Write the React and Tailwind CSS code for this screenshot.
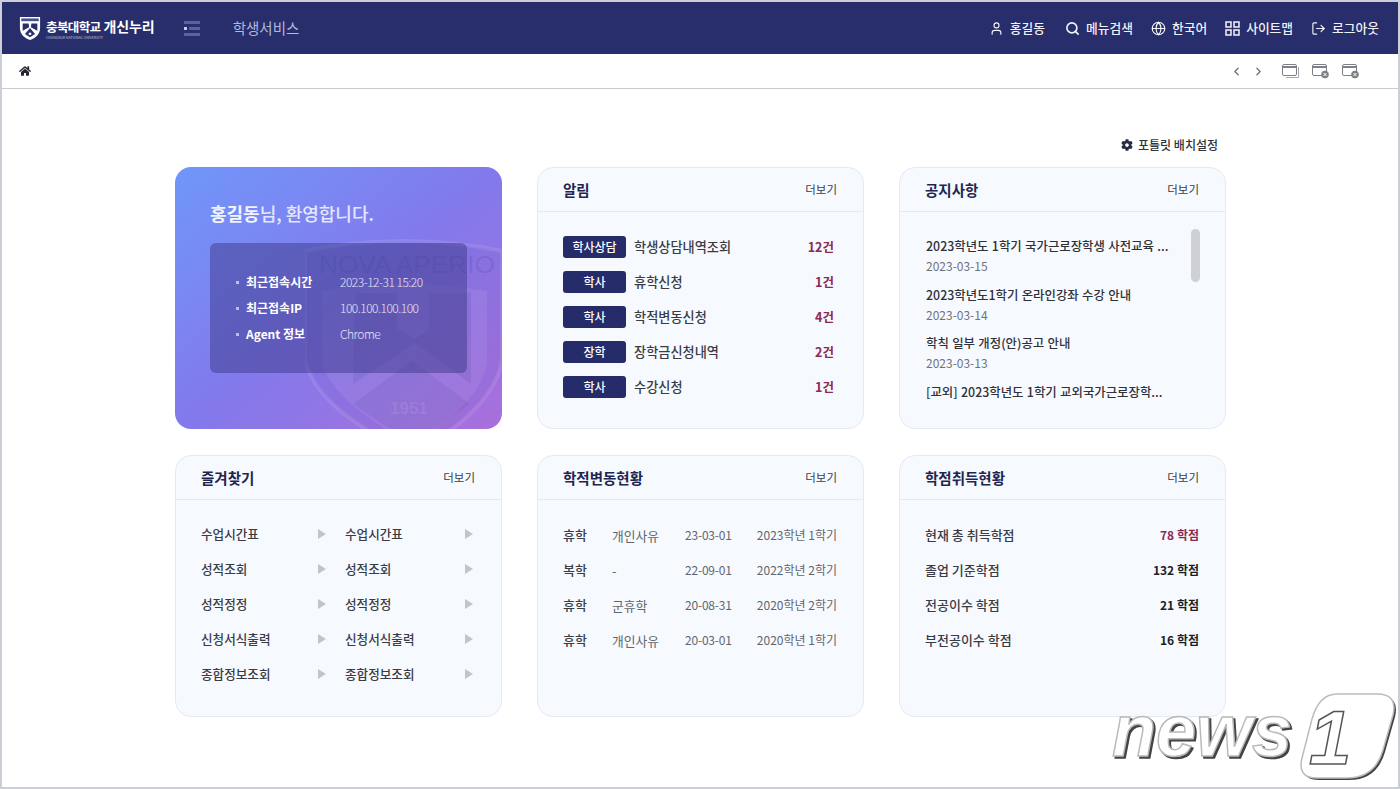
import { User, Search, Globe, LogOut, ChevronLeft, ChevronRight } from "lucide-react";
import { FaCog, FaHome } from "react-icons/fa";

const topMenu = [
  { icon: User, label: "홍길동" },
  { icon: Search, label: "메뉴검색", stroke: 2.6 },
  { icon: Globe, label: "한국어" },
  { icon: GridIcon, label: "사이트맵" },
  { icon: LogOut, label: "로그아웃" },
];

const alerts = [
  { tag: "학사상담", name: "학생상담내역조회", count: "12건" },
  { tag: "학사", name: "휴학신청", count: "1건" },
  { tag: "학사", name: "학적변동신청", count: "4건" },
  { tag: "장학", name: "장학금신청내역", count: "2건" },
  { tag: "학사", name: "수강신청", count: "1건" },
];

const notices = [
  { title: "2023학년도 1학기 국가근로장학생 사전교육 ...", date: "2023-03-15" },
  { title: "2023학년도1학기 온라인강좌 수강 안내", date: "2023-03-14" },
  { title: "학칙 일부 개정(안)공고 안내", date: "2023-03-13" },
  { title: "[교외] 2023학년도 1학기 교외국가근로장학..." },
];

const favorites = ["수업시간표", "성적조회", "성적정정", "신청서식출력", "종합정보조회"];

const changes = [
  ["휴학", "개인사유", "23-03-01", "2023학년 1학기"],
  ["복학", "-", "22-09-01", "2022학년 2학기"],
  ["휴학", "군휴학", "20-08-31", "2020학년 2학기"],
  ["휴학", "개인사유", "20-03-01", "2020학년 1학기"],
];

const credits = [
  { label: "현재 총 취득학점", value: "78 학점", hot: true },
  { label: "졸업 기준학점", value: "132 학점" },
  { label: "전공이수 학점", value: "21 학점" },
  { label: "부전공이수 학점", value: "16 학점" },
];

function GridIcon({ size = 15, className }) {
  return (
    <svg width={size} height={size} viewBox="0 0 15 15" fill="none" stroke="currentColor" strokeWidth="1.5" className={className}>
      <rect x="1" y="1" width="5" height="5" />
      <rect x="9" y="1" width="5" height="5" />
      <rect x="1" y="9" width="5" height="5" />
      <rect x="9" y="9" width="5" height="5" />
    </svg>
  );
}

function WindowIcon({ mode }) {
  return (
    <svg width="18" height="16" viewBox="0 0 18 16" fill="none">
      <rect x="0.5" y="1.5" width="14" height="11" rx="1.5" stroke="#7d8087" fill="#fff" />
      <path d="M1 4h13" stroke="#7d8087" strokeWidth="2" />
      {mode === "copy" && <path d="M16.5 4v10.500H4" stroke="#a6a8ae" />}
      {mode === "close" && (
        <>
          <circle cx="13" cy="11.500" r="3.800" fill="#7d8087" />
          <path d="M11.500 10l3 3M14.500 10l-3 3" stroke="#fff" />
        </>
      )}
    </svg>
  );
}

function Shield({ className }) {
  return (
    <svg viewBox="0 0 24 27" className={className}>
      <path d="M1 1h22v12c0 7-5 11-11 13C6 24 1 20 1 13z" fill="#fff" />
      <path d="M2.500 2.500h19v3h-19z" fill="#4a5090" />
      <path d="M4 8h6.500L11 12 4 16zM20 8h-6.500L13 12l7 4z" fill="#272e6b" />
      <path d="M12 13l5.500 6.500L12 23l-5.500-3.500z" fill="#272e6b" />
      <path d="M12 17.500l2 2-2 1.300-2-1.300z" fill="#fff" />
    </svg>
  );
}

function Card({ title, children }) {
  return (
    <section className="h-[262px] rounded-2xl border border-[#e6e9f1] bg-[#f6f9fe] flex flex-col">
      <div className="h-[44px] shrink-0 flex items-center justify-between pl-[25px] pr-[26px] border-b border-[#e6e9f1]">
        <h2 className="text-[14.500px] font-bold text-[#1f2550]">{title}</h2>
        <span className="text-[11.500px] text-[#3a3d46]">더보기</span>
      </div>
      {children}
    </section>
  );
}

function WelcomeCard() {
  return (
    <section className="relative h-[262px] rounded-2xl overflow-hidden bg-gradient-to-br from-[#6f97fb] via-[#8279ec] to-[#a96fdb]">
      <svg viewBox="0 0 197 190" className="absolute left-[130px] top-[72px] w-[197px] h-[190px]">
        <path d="M0 12 Q100 -8 197 12 V120 Q190 170 107 215 Q10 170 0 120 Z" fill="#4a3fa0" fillOpacity="0.07" stroke="#fff" strokeOpacity="0.1" strokeWidth="4" />
        <path d="M17 52 Q100 38 182 52 V125 Q175 165 107 205 Q30 165 17 125 Z" fill="#fff" fillOpacity="0.07" />
        <path d="M50 54 H92 V90 L110 100 V104 L48 145 Z" fill="#4a3fa0" fillOpacity="0.14" />
        <path d="M166 54 H124 V90 L110 100 V104 L166 145 Z" fill="#4a3fa0" fillOpacity="0.14" />
        <path d="M107 122 L165 165 L107 205 L48 165 Z" fill="#4a3fa0" fillOpacity="0.12" />
        <text x="14" y="34" fontSize="24" fill="#4a3fa0" fillOpacity="0.2" fontFamily="Liberation Sans, sans-serif" textLength="176" lengthAdjust="spacingAndGlyphs">NOVA APERIO</text>
        <text x="85" y="175" fontSize="17" fontWeight="700" fill="#fff" fillOpacity="0.1" fontFamily="Liberation Sans, sans-serif">1951</text>
      </svg>
      <div className="relative pt-[35px] pl-[35px]">
        <h2 className="text-lg leading-6 -mt-px font-medium text-white/80">
          <span className="font-bold text-white/90">홍길동</span>님, 환영합니다.
        </h2>
        <dl className="mt-[18px] w-[257px] h-[130px] rounded-md bg-[#3b3a8a]/50 pt-[29px] pl-[26px] flex flex-col gap-[6px] text-xs text-white">
          {[
            ["최근접속시간", "2023-12-31 15:20"],
            ["최근접속IP", "100.100.100.100"],
            ["Agent 정보", "Chrome"],
          ].map(([key, value]) => (
            <div key={key} className="flex items-center h-5">
              <span className="size-[3px] bg-white/60 mr-[7px]" />
              <dt className="w-[94px] font-bold">{key}</dt>
              <dd className="font-light tracking-[-0.5px] text-white/85">{value}</dd>
            </div>
          ))}
        </dl>
      </div>
    </section>
  );
}

function News1Logo() {
  const font = "Liberation Sans, sans-serif";
  const badge = "M230 4 H270 Q291 4 286 25 L276 60 Q268 88 240 88 H210 Q190 88 195 68 L205 29 Q212 4 230 4 Z";
  return (
    <svg width="292" height="92" viewBox="0 0 292 92" className="absolute left-[1105px] top-[688px]">
      <g className="drop-shadow-[2px_2px_0_#444]">
        <text x="5" y="66" fontSize="75" fontWeight="700" fontStyle="italic" fontFamily={font} textLength="180" lengthAdjust="spacingAndGlyphs" fill="#fff" stroke="#b9b9b9" strokeWidth="1.500">news</text>
      </g>
      <path d={badge} fill="#444" transform="translate(2 2)" />
      <path d={badge} fill="#fff" stroke="#bcbcbc" strokeWidth="1.500" />
      <text x="202" y="74" fontSize="76" fontWeight="700" fontStyle="italic" fontFamily={font} fill="#fff" stroke="#555" strokeWidth="1.500">1</text>
    </svg>
  );
}

export default function App() {
  return (
    <div className="relative w-[1400px] h-[789px] overflow-hidden border-2 border-[#cdcfd6] bg-white [font-family:'Noto_Sans_CJK_KR','Noto_Sans',sans-serif]">
      <header className="h-[52px] bg-[#272e6b] flex items-center pl-[17px] pr-[19px] text-white">
        <Shield className="w-[22px] h-[25px]" />
        <div className="ml-[5px] flex flex-col">
          <div className="flex items-baseline leading-[15px]">
            <span className="text-[12.500px] font-bold tracking-[-0.6px]">충북대학교</span>
            <span className="ml-[3px] text-sm font-bold tracking-[-0.1px]">개신누리</span>
          </div>
          <span className="text-[3.500px] leading-[4px] text-white/70">CHUNGBUK NATIONAL UNIVERSITY</span>
        </div>
        <div className="ml-[29px] w-4 flex flex-col gap-[3px]">
          <span className="h-[3px] bg-[#5b6199]" />
          <span className="h-[3px] flex gap-[2px]">
            <span className="w-[3px] bg-[#c9cbe6]" />
            <span className="flex-1 bg-[#5b6199]" />
          </span>
          <span className="h-[3px] bg-[#5b6199]" />
        </div>
        <span className="ml-[33px] text-[14.500px] text-[#b4b8dc]">학생서비스</span>
        <nav className="ml-auto flex items-center gap-[18px]">
          {topMenu.map(({ icon: Icon, label, stroke }) => (
            <a key={label} className="flex items-center gap-[6px] first:mr-[2px] text-[12.750px] font-medium text-white/95">
              <Icon size={15} strokeWidth={stroke || 1.8} />
              {label}
            </a>
          ))}
        </nav>
      </header>

      <div className="h-[35px] border-b border-[#c9cbd0] flex items-center pl-[17px] pr-[38px]">
        <FaHome size={12} className="text-[#23262e]" />
        <div className="ml-auto flex items-center text-[#6e7178]">
          <ChevronLeft size={13} strokeWidth={2.4} />
          <ChevronRight size={13} strokeWidth={2.4} className="ml-[9px]" />
          <div className="ml-[17px] flex items-center gap-[12px]">
            <WindowIcon mode="copy" />
            <WindowIcon mode="close" />
            <WindowIcon mode="close" />
          </div>
        </div>
      </div>

      <main className="pl-[173px] pt-[45px]">
        <div className="w-[1051px]">
          <div className="h-5 mb-[13px] pr-2 flex items-center justify-end gap-[5px] text-xs font-medium text-[#30333c] translate-y-px">
            <FaCog size={12} className="text-[#272c45]" />
            포틀릿 배치설정
          </div>
          <div className="grid grid-cols-[327px_327px_327px] gap-x-[35px] gap-y-[26px]">
            <WelcomeCard />

            <Card title="알림">
              <ul className="pt-[24px] pl-[25px] pr-[29px] flex flex-col gap-[13px]">
                {alerts.map((a) => (
                  <li key={a.name} className="h-[22px] flex items-center">
                    <span className="w-[63px] h-[22px] rounded-[3px] bg-[#262c6a] text-white text-xs font-medium flex items-center justify-center">{a.tag}</span>
                    <span className="ml-2 text-[13.200px] font-medium text-[#3a3c44]">{a.name}</span>
                    <span className="ml-auto text-[12.500px] font-bold text-[#8c2a55]">{a.count}</span>
                  </li>
                ))}
              </ul>
            </Card>

            <Card title="공지사항">
              <div className="relative flex-1">
                <ul className="pt-[24px] pl-[26px]">
                  {notices.map((n) => (
                    <li key={n.title} className="mb-[8.700px]">
                      <p className="text-[12.400px] leading-[20px] font-medium text-[#2f3139] [word-spacing:0.6px]">{n.title}</p>
                      {n.date && <p className="text-xs leading-[20px] text-[#6f727a]">{n.date}</p>}
                    </li>
                  ))}
                </ul>
                <span className="absolute right-[25px] top-[17px] w-[9px] h-[53px] rounded-full bg-[#cfd0d7]" />
              </div>
            </Card>

            <Card title="즐겨찾기">
              <ul className="pt-[23px] pl-[25px] pr-[28px] grid grid-cols-[144px_1fr] gap-y-[13px]">
                {favorites.flatMap((name) => [name + "-a", name + "-b"]).map((key) => (
                  <li key={key} className="h-[22px] flex items-center justify-between pr-[19px] [&:nth-child(even)]:pr-0 text-[12.600px] font-medium text-[#3a3c44]">
                    {key.slice(0, -2)}
                    <span className="w-0 h-0 border-y-[5px] border-y-transparent border-l-[8px] border-l-[#c1c4cc]" />
                  </li>
                ))}
              </ul>
            </Card>

            <Card title="학적변동현황">
              <ul className="pt-[24px] pl-[25px] pr-[26px] flex flex-col gap-[13px]">
                {changes.map((c) => (
                  <li key={c[2]} className="h-[22px] grid grid-cols-[49px_73px_71px_1fr] items-center text-xs text-[#62656d]">
                    <span className="text-[13px] font-medium text-[#3a3c44]">{c[0]}</span>
                    <span className="text-[12.750px]">{c[1]}</span>
                    <span className="tracking-[-0.2px]">{c[2]}</span>
                    <span className="text-right">{c[3]}</span>
                  </li>
                ))}
              </ul>
            </Card>

            <Card title="학점취득현황">
              <ul className="pt-[24px] pl-[25px] pr-[26px] flex flex-col gap-[13px]">
                {credits.map((c) => (
                  <li key={c.label} className="h-[22px] flex items-center justify-between text-[13px] font-medium text-[#3a3c44]">
                    {c.label}
                    <span className={c.hot ? "text-xs font-bold text-[#8c2a55]" : "text-xs font-bold text-[#1d1f27]"}>{c.value}</span>
                  </li>
                ))}
              </ul>
            </Card>
          </div>
        </div>
      </main>
      <News1Logo />
    </div>
  );
}
